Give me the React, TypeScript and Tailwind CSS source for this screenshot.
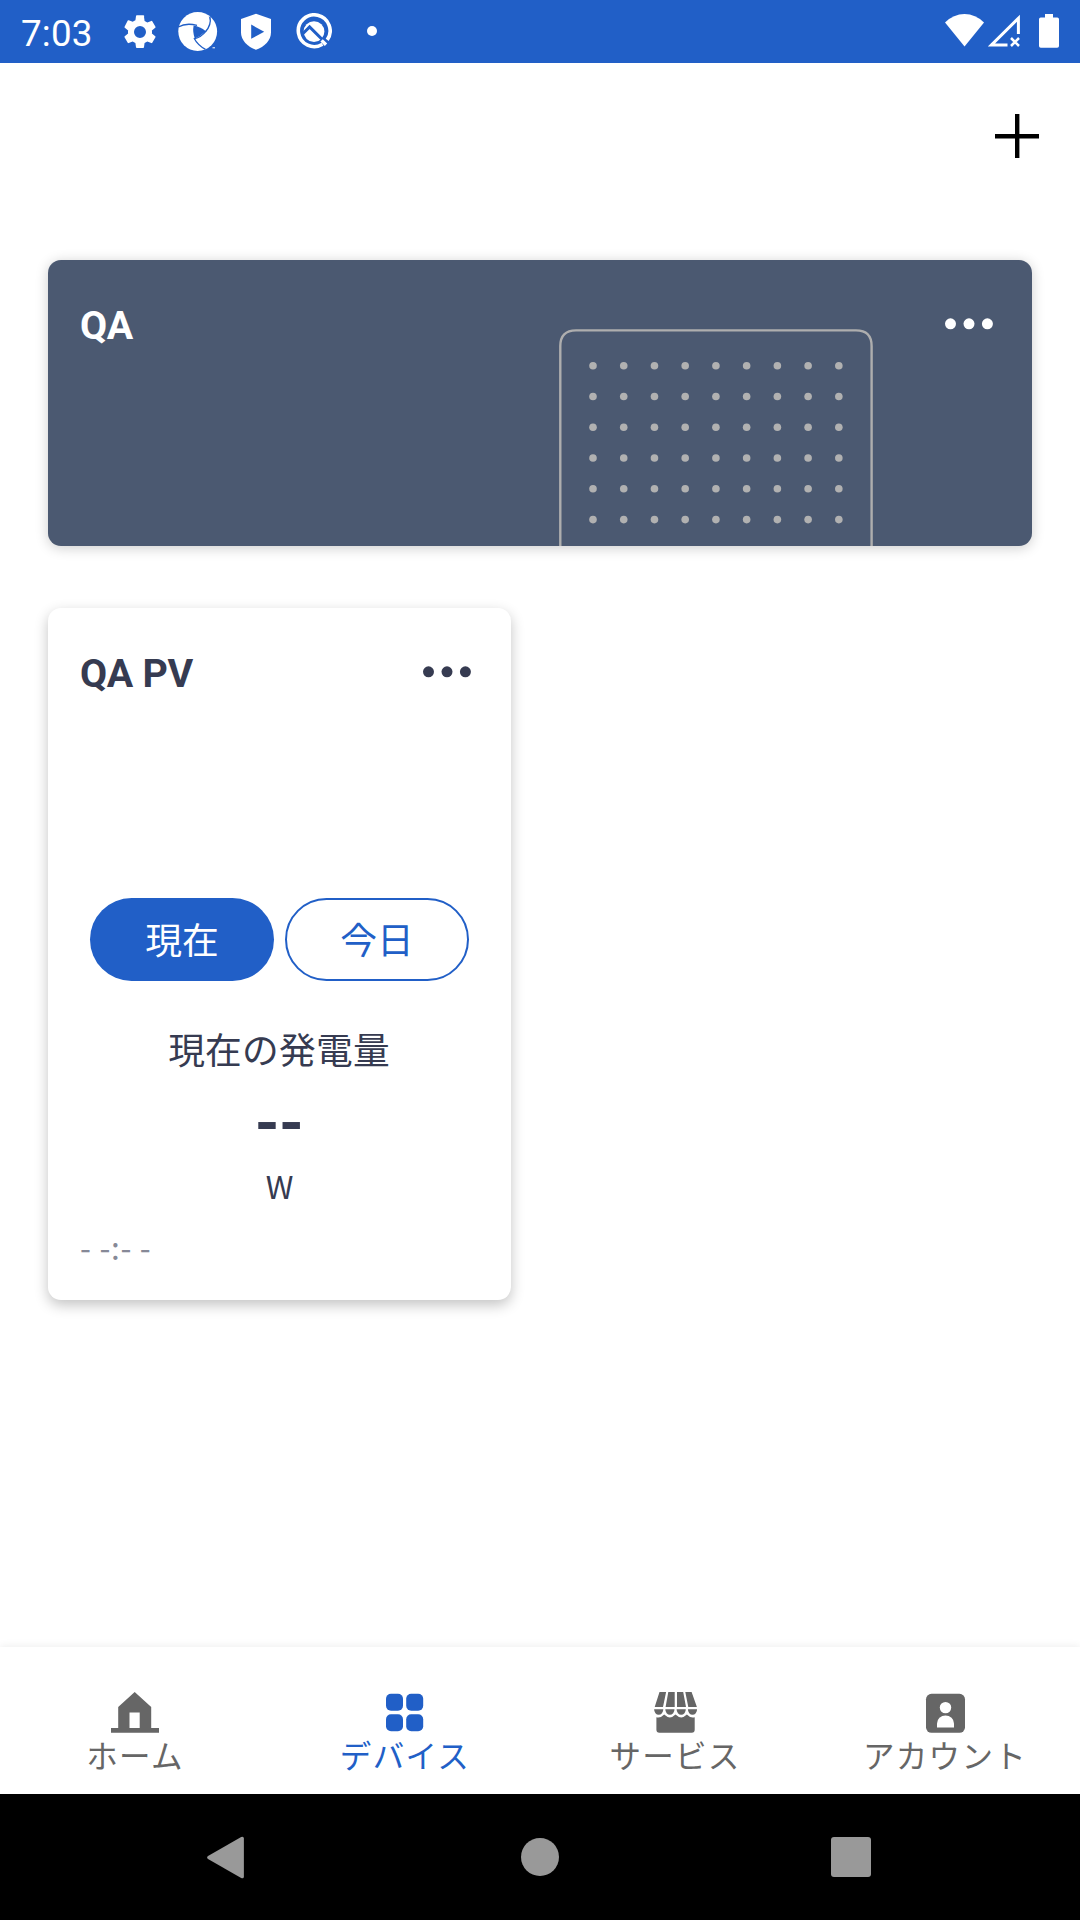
import React from "react";

const BLUE = "#215fc7";

function Dots({ color }: { color: string }) {
  return (
    <svg width="48" height="12" viewBox="0 0 48 12" fill={color}>
      <circle cx="5.5" cy="5.8" r="5.5" />
      <circle cx="24" cy="5.8" r="5.5" />
      <circle cx="42.4" cy="5.8" r="5.5" />
    </svg>
  );
}

function StatusBar() {
  return (
    <header className="flex h-[63px] items-start bg-[#215fc7] text-white">
      <div className="ml-[21px] mt-[12px] w-[71px] whitespace-nowrap text-[36.75px] leading-[44px] tracking-[0.2px]">7:03</div>
      <svg className="ml-[28px] mt-[11.5px]" width="40" height="40" viewBox="0 0 24 24" fill="white">
        <path d="M19.14 12.94c.04-.3.06-.61.06-.94s-.02-.64-.07-.94l2.03-1.58a.49.49 0 0 0 .12-.61l-1.92-3.32a.49.49 0 0 0-.59-.22l-2.39.96a7.03 7.03 0 0 0-1.62-.94l-.36-2.54A.48.48 0 0 0 13.92 2h-3.84a.48.48 0 0 0-.47.41l-.36 2.54c-.59.24-1.13.57-1.62.94l-2.39-.96a.48.48 0 0 0-.59.22L2.74 8.87a.48.48 0 0 0 .12.61l2.03 1.58c-.05.3-.09.63-.09.94s.02.64.07.94l-2.03 1.58a.49.49 0 0 0-.12.61l1.92 3.32c.12.22.37.29.59.22l2.39-.96c.5.38 1.03.7 1.62.94l.36 2.54c.05.24.24.41.48.41h3.84c.24 0 .44-.17.47-.41l.36-2.54c.59-.24 1.13-.56 1.62-.94l2.39.96c.22.08.47 0 .59-.22l1.92-3.32a.48.48 0 0 0-.12-.61zM12 15.6a3.6 3.6 0 1 1 0-7.2 3.6 3.6 0 0 1 0 7.2z" />
      </svg>
      <svg className="ml-[18px] mt-[12px]" width="40" height="40" viewBox="0 0 40 40">
        <circle cx="19.7" cy="19.5" r="19.4" fill="white" />
        <path d="M15.6 13.400Q22 14.300 27.800 19.200 22.500 24.300 16.800 26.400 14.400 19.500 15.600 13.400Z" fill={BLUE} />
        <g fill="none" stroke={BLUE} strokeWidth="1.3">
          <path d="M.3 15Q8 10.500 19 13.400" />
          <path d="M27.600 19.500Q33.500 13 32 5" />
          <path d="M16.400 26.800Q23 25.500 28 19.200" />
          <path d="M16 26Q19.500 33 27.500 37.400" />
        </g>
        <path d="M30.600 4Q32.600 5 32.400 10L31.500 6Z" fill={BLUE} />
        <path d="M34.500 35.800h2.500" stroke="white" strokeWidth="1" />
      </svg>
      <svg className="ml-[23px] mt-[13px]" width="30" height="37" viewBox="0 0 30 37">
        <path d="M15 .8 30 6v13.5C30 27 23.500 34 15 36.700 6.500 34 0 27 0 19.500V6Z" fill="white" />
        <path d="M10.200 11.600v14.200L23.200 18.700Z" fill={BLUE} />
      </svg>
      <svg className="ml-[25px] mt-[13px]" width="36" height="37" viewBox="0 0 36 37" fill="none">
        <path d="M26.500 31.300A15.900 15.900 0 1 1 31.200 26.900" stroke="white" strokeWidth="3.600" />
        <circle cx="18" cy="18.600" r="10.400" fill="white" />
        <path d="M6.500 21 13.600 13.900 29 29.300" stroke={BLUE} strokeWidth="3" />
        <path d="M25.600 27.400 30 31.800" stroke="white" strokeWidth="3.400" />
      </svg>
      <div className="ml-[35px] mt-[26px] h-[10px] w-[10px] rounded-full bg-white" />
      <div className="flex-1" />
      <svg className="mt-[14px]" width="40" height="33" viewBox="0 0 40 33" fill="white">
        <path d="M0 8.500Q8.500 0 19.500 0T39 8.500L19.500 32.500Z" />
      </svg>
      <svg className="ml-[3px] mt-[14px]" width="33" height="34" viewBox="0 0 33 34" fill="none" stroke="white">
        <path d="M19.500 31H3.500L30.400 4.300V20" strokeWidth="3" />
        <path d="M23 24l8 8M31 24l-8 8" strokeWidth="2.500" />
      </svg>
      <svg className="ml-[18px] mr-[21px] mt-[14px]" width="20" height="34" viewBox="0 0 20 34" fill="white">
        <path d="M6 0h8v3.500h4.200A1.800 1.800 0 0 1 20 5.300v26.600a1.800 1.800 0 0 1-1.800 1.800H1.800A1.800 1.800 0 0 1 0 31.900V5.300a1.800 1.800 0 0 1 1.800-1.800H6Z" />
      </svg>
    </header>
  );
}

const rows = [0, 1, 2, 3, 4, 5];
const cols = [0, 1, 2, 3, 4, 5, 6, 7, 8];

function GroupCard() {
  return (
    <section className="mx-[48px] mt-[79px] flex h-[286px] items-start rounded-[13px] bg-[#4b5971] pl-[32px] pr-[39.5px] shadow-[0_2px_13px_rgba(0,0,0,0.2)]">
      <h1 className="mt-[43px] w-[479px] text-[39.375px] font-bold leading-[46px] tracking-[-0.3px] text-white">QA</h1>
      <svg className="mt-[69px]" width="314" height="217" viewBox="0 0 314 217" fill="none">
        <path d="M1.300 217V17Q1.300 1.400 17 1.400H297Q312.600 1.400 312.600 17V217" stroke="#aeaeae" strokeWidth="2.400" />
        <g fill="#b1b1b1">
          {rows.map((r) => cols.map((c) => <circle key={`${r}-${c}`} cx={34 + c * 30.73} cy={36.700 + r * 30.780} r="3.8" />))}
        </g>
      </svg>
      <div className="flex-1" />
      <div className="mt-[57.5px]">
        <Dots color="#ffffff" />
      </div>
    </section>
  );
}

function DeviceCard() {
  return (
    <section className="ml-[48px] mt-[62px] flex h-[692px] w-[463px] flex-col rounded-[13px] bg-white text-[#363b51] shadow-[0_5px_14px_rgba(0,0,0,0.24)]">
      <div className="flex h-[89px] items-start justify-between pl-[32px] pr-[40px]">
        <h2 className="mt-[43px] text-[39.375px] font-bold leading-[46px] tracking-[-0.3px]">QA PV</h2>
        <div className="mt-[57.5px]">
          <Dots color="#363b51" />
        </div>
      </div>
      <div className="mt-[201px] flex justify-center gap-[11px] text-[36.75px] leading-[53px]">
        <button className="h-[83px] w-[184px] rounded-full bg-[#215fc7] pt-[3px] text-white">現在</button>
        <button className="h-[83px] w-[184px] rounded-full border-2 border-[#215fc7] pt-[3px] text-[#215fc7]">今日</button>
      </div>
      <div className="mr-[1px] mt-[44px] text-center text-[36.75px] leading-[53px] tracking-[0.2px]">現在の発電量</div>
      <div className="mr-[1px] mt-[14px] text-center text-[63px] font-bold leading-[64px] tracking-[-0.5px]">--</div>
      <div className="mt-[10px] text-center font-['Noto_Sans_CJK_JP',sans-serif] text-[31.5px] leading-[38px]">W</div>
      <div className="mt-[21px] pl-[32px] font-['Noto_Sans_CJK_JP',sans-serif] text-[31.5px] leading-[43px] tracking-[0.7px] text-[#868997]">- -:- -</div>
    </section>
  );
}

const tabs = [
  {
    label: "ホーム",
    icon: (
      <path d="M23.700 2 40.200 17V38H48V42.700H0V38H7.200V17ZM18.500 22.500V38H28.700V22.500Z" fill="#666" fillRule="evenodd" />
    ),
  },
  {
    label: "デバイス",
    active: true,
    icon: (
      <g fill={BLUE}>
        <rect x="5" y="3.800" width="17" height="17" rx="5" />
        <rect x="25.200" y="3.800" width="17" height="17" rx="5" />
        <rect x="5" y="24.200" width="17" height="17" rx="5" />
        <rect x="25.200" y="24.200" width="17" height="17" rx="5" />
      </g>
    ),
  },
  {
    label: "サービス",
    icon: (
      <g fill="#666">
        <path d="M8.500 1.900h6.600L12 17H3.700ZM17.300 1.900h6.400V17H14.600ZM26 1.900h6.200L35 17H26ZM34.300 1.900h6.300L45.900 17H37.300Z" />
        <path d="M3.100 19.300h9.200a4.600 5.500 0 0 1-9.200 0ZM14.300 19.300h9.200a4.600 5.500 0 0 1-9.200 0ZM25.600 19.300h9.200a4.600 5.500 0 0 1-9.200 0ZM36.900 19.300h9.200a4.600 5.500 0 0 1-9.200 0Z" />
        <path d="M5.400 27.200Q10 28.200 13.200 24.600 18.900 30.200 24.500 24.600 30.200 30.200 35.900 24.600 39 28.200 43.700 27.200V39.700a3 3 0 0 1-3 3H8.400a3 3 0 0 1-3-3Z" />
      </g>
    ),
  },
  {
    label: "アカウント",
    icon: (
      <g>
        <rect x="5" y="3.800" width="39" height="39" rx="5.500" fill="#666" />
        <circle cx="24.500" cy="17.600" r="5.700" fill="white" />
        <path d="M16 37.400V33.500a8.500 8 0 0 1 17 0V37.400Z" fill="white" />
      </g>
    ),
  },
];

function TabBar() {
  return (
    <nav className="grid h-[147px] grid-cols-4 bg-white shadow-[0_-1px_8px_rgba(0,0,0,0.07)]">
      {tabs.map((t) => (
        <div key={t.label} className="flex flex-col items-center">
          <svg className="mt-[43px]" width="49" height="44" viewBox="0 0 49 44">
            {t.icon}
          </svg>
          <span className={`mt-px whitespace-nowrap text-[31.5px] leading-[46px] tracking-[1.3px] ${t.active ? "text-[#215fc7]" : "text-[#666666]"}`}>
            {t.label}
          </span>
        </div>
      ))}
    </nav>
  );
}

function SystemNav() {
  return (
    <div className="flex h-[126px] items-center justify-between bg-black pl-[206px] pr-[209px]">
      <svg width="38" height="43" viewBox="0 0 38 43">
        <path d="M37.900 2.500V40.500Q37.700 43.200 35.200 42L2 23Q.2 21.500 2 20L35.200 1Q37.700-.2 37.900 2.500Z" fill="#999" />
      </svg>
      <div className="ml-[4px] h-[38px] w-[38px] rounded-full bg-[#999999]" />
      <div className="h-[40px] w-[40px] rounded-[3px] bg-[#999999]" />
    </div>
  );
}

export default function App() {
  return (
    <div className="flex h-[1920px] w-[1080px] flex-col overflow-hidden bg-white font-['Roboto','Noto_Sans_CJK_JP',sans-serif]" lang="ja">
      <StatusBar />
      <div className="flex h-[118px] items-start justify-end pr-[41px]">
        <svg className="mt-[51px]" width="44" height="44" viewBox="0 0 44 44" stroke="black" strokeWidth="4.400">
          <path d="M22.200 0V44M0 22.200H44" />
        </svg>
      </div>
      <GroupCard />
      <DeviceCard />
      <div className="flex-1" />
      <TabBar />
      <SystemNav />
    </div>
  );
}
